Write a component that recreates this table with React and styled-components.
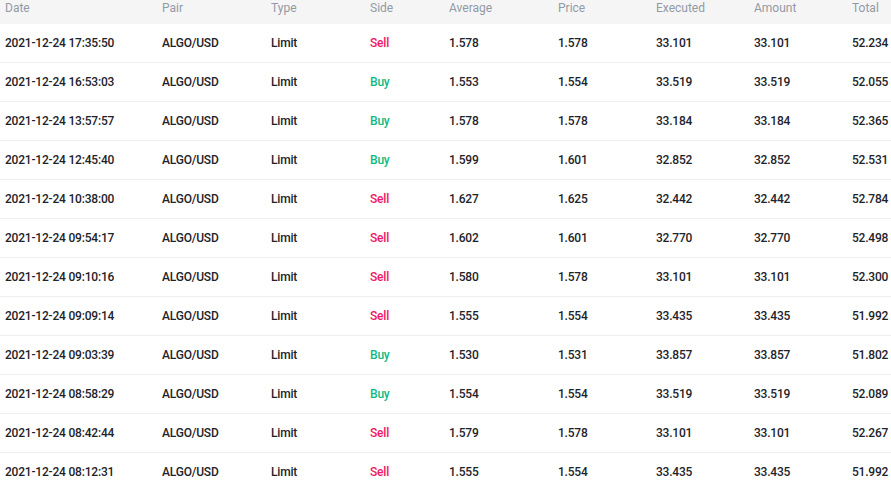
import React from "react";
import styled, { createGlobalStyle } from "styled-components";

const GlobalStyle = createGlobalStyle`
  html, body {
    margin: 0;
    padding: 0;
    background: #ffffff;
    font-family: Roboto, "Liberation Sans", sans-serif;
  }
`;

const orders = [
  ["2021-12-24 17:35:50", "Sell", "1.578", "1.578", "33.101", "52.234"],
  ["2021-12-24 16:53:03", "Buy", "1.553", "1.554", "33.519", "52.055"],
  ["2021-12-24 13:57:57", "Buy", "1.578", "1.578", "33.184", "52.365"],
  ["2021-12-24 12:45:40", "Buy", "1.599", "1.601", "32.852", "52.531"],
  ["2021-12-24 10:38:00", "Sell", "1.627", "1.625", "32.442", "52.784"],
  ["2021-12-24 09:54:17", "Sell", "1.602", "1.601", "32.770", "52.498"],
  ["2021-12-24 09:10:16", "Sell", "1.580", "1.578", "33.101", "52.300"],
  ["2021-12-24 09:09:14", "Sell", "1.555", "1.554", "33.435", "51.992"],
  ["2021-12-24 09:03:39", "Buy", "1.530", "1.531", "33.857", "51.802"],
  ["2021-12-24 08:58:29", "Buy", "1.554", "1.554", "33.519", "52.089"],
  ["2021-12-24 08:42:44", "Sell", "1.579", "1.578", "33.101", "52.267"],
  ["2021-12-24 08:12:31", "Sell", "1.555", "1.554", "33.435", "51.992"],
];

const headers = ["Date", "Pair", "Type", "Side", "Average", "Price", "Executed", "Amount", "Total"];

export default function App() {
  return (
    <>
      <GlobalStyle />
      <Table>
        <HeadRow>
          {headers.map((h) => (
            <HeadCell key={h}>{h}</HeadCell>
          ))}
        </HeadRow>
        {orders.map(([date, side, avg, price, exec, total], i) => (
          <Row key={i}>
            <Cell>{date}</Cell>
            <Cell>ALGO/USD</Cell>
            <Cell>Limit</Cell>
            <Cell side={side}>{side}</Cell>
            <Cell>{avg}</Cell>
            <Cell>{price}</Cell>
            <Cell>{exec}</Cell>
            <Cell>{exec}</Cell>
            <Cell>{total}</Cell>
          </Row>
        ))}
      </Table>
    </>
  );
}

const Table = styled.div`
  width: 891px;
  height: 482px;
  overflow: hidden;
`;

const grid = `
  display: grid;
  grid-template-columns: 157px 109px 99px 79px 109px 98px 98px 98px 1fr;
  padding-left: 5px;
  align-items: center;
`;

const HeadRow = styled.div`
  ${grid}
  height: 24px;
  background: #f5f5f5;
`;

const HeadCell = styled.div`
  font-size: 12px;
  color: #929aa5;
  line-height: 14px;
  margin-top: -8px;
`;

const Row = styled.div`
  ${grid}
  height: 38px;
  border-bottom: 1px solid #eeeeee;
`;

const Cell = styled.div`
  font-size: 12px;
  font-weight: 500;
  letter-spacing: -0.2px;
  color: ${(p) => (p.side === "Sell" ? "#ef1865" : p.side === "Buy" ? "#10b981" : "#1e2329")};
  white-space: nowrap;
`;
